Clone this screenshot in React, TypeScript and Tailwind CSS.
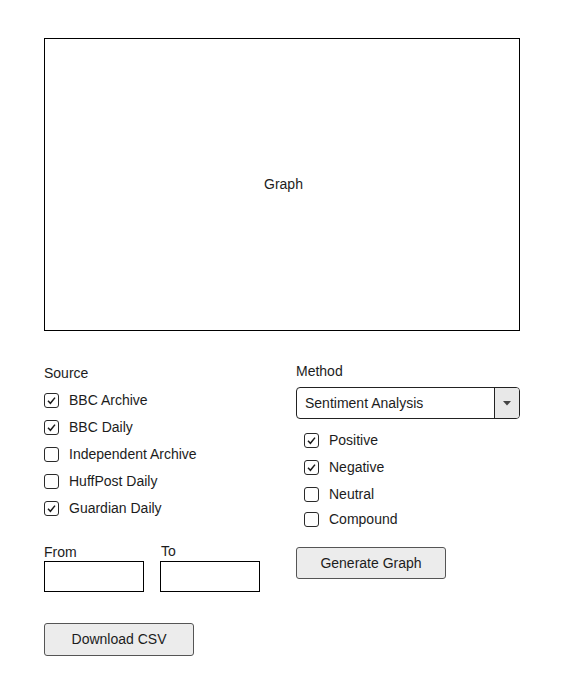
import { useState } from "react"

type Item = { label: string; checked: boolean }

const sources: Item[] = [
  { label: "BBC Archive", checked: true },
  { label: "BBC Daily", checked: true },
  { label: "Independent Archive", checked: false },
  { label: "HuffPost Daily", checked: false },
  { label: "Guardian Daily", checked: true },
]

const methods: Item[] = [
  { label: "Positive", checked: true },
  { label: "Negative", checked: true },
  { label: "Neutral", checked: false },
  { label: "Compound", checked: false },
]

function Check({ item, className }: { item: Item; className: string }) {
  const [on, setOn] = useState(item.checked)
  return (
    <label className={`flex items-center gap-[10px] cursor-pointer ${className}`} onClick={() => setOn(!on)}>
      <span className="w-[15px] h-[15px] border border-[#2a2a2a] rounded-[3px] flex items-center justify-center bg-white">
        {on && (
          <svg width="11" height="11" viewBox="0 0 11 11">
            <path d="M2 5.8 L4.4 8.3 L9 2.6" fill="none" stroke="#1a1a1a" strokeWidth="1.5" />
          </svg>
        )}
      </span>
      <span>{item.label}</span>
    </label>
  )
}

export default function App() {
  return (
    <div
      className="pl-[44px] pt-[38px] text-[14px] text-[#1c1c1c]"
      style={{ fontFamily: '"Liberation Sans", Arial, sans-serif' }}
    >
      {/* Graph area */}
      <div className="w-[476px] h-[293px] border border-black flex items-center justify-center">
        <span className="-mt-[1px] ml-[3px]">Graph</span>
      </div>

      <div className="flex w-[476px]">
        {/* Source column */}
        <div className="w-[252px] flex flex-col">
          <div className="mt-[33px] h-[18px] leading-[18px]">Source</div>
          <div className="mt-[5px] flex flex-col">
            {sources.map((s) => (
              <Check key={s.label} item={s} className="h-[27px]" />
            ))}
          </div>
          <div className="mt-[21px] flex gap-[16px]">
            <div className="flex flex-col">
              <span className="h-[18px] leading-[18px]">From</span>
              <input className="w-[100px] h-[31px] border border-black outline-none px-1" />
            </div>
            <div className="flex flex-col">
              <span className="h-[18px] leading-[16px] pl-[1px]">To</span>
              <input className="w-[100px] h-[31px] border border-black outline-none px-1" />
            </div>
          </div>
          <button className="mt-[31px] w-[150px] h-[33px] bg-[#ececec] border border-[#555] rounded-[3px]">
            Download CSV
          </button>
        </div>

        {/* Method column */}
        <div className="w-[224px] flex flex-col">
          <div className="mt-[31px] h-[18px] leading-[18px]">Method</div>
          <div className="mt-[7px] h-[32px] w-[224px] border border-[#222] rounded-[4px] flex overflow-hidden">
            <div className="flex-1 flex items-center pl-[8px]">Sentiment Analysis</div>
            <div className="w-[25px] border-l border-[#222] bg-[#e8e8e8] flex items-center justify-center">
              <svg width="8" height="5" viewBox="0 0 8 5">
                <path d="M0 0 L8 0 L4 4.5 Z" fill="#444" />
              </svg>
            </div>
          </div>
          <div className="mt-[8px] flex flex-col pl-[8px]">
            {methods.map((m, i) => (
              <Check key={m.label} item={m} className={i === 3 ? "h-[23px]" : "h-[27px]"} />
            ))}
          </div>
          <button className="mt-[16px] w-[150px] h-[32px] bg-[#ececec] border border-[#555] rounded-[3px]">
            Generate Graph
          </button>
        </div>
      </div>
    </div>
  )
}
